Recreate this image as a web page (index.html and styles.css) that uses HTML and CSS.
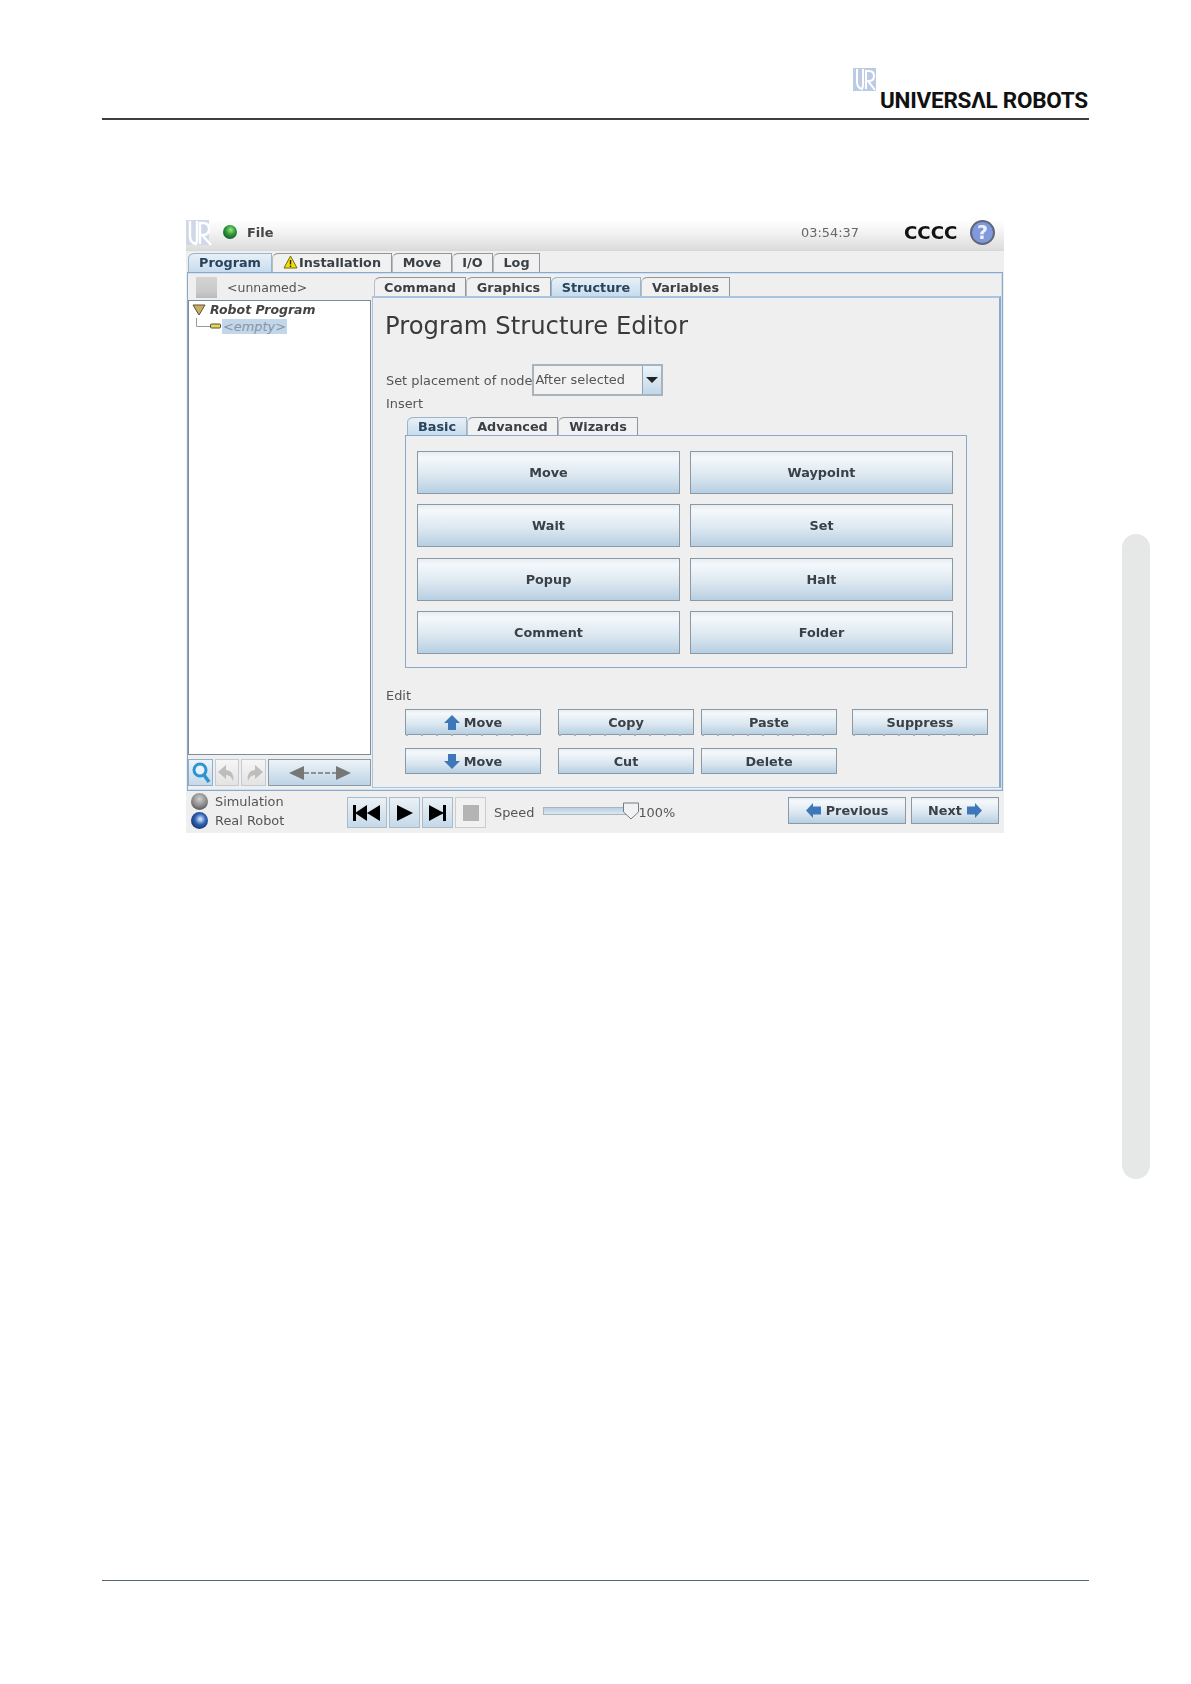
FILE: index.html
```html
<!DOCTYPE html>
<html lang="en">
<head>
<meta charset="utf-8">
<title>Program Structure Editor</title>
<link rel="stylesheet" href="styles.css">
</head>
<body>
<div class="page">
  <header class="doc-header">
    <div class="brand">
      <svg class="brand-mark" width="24" height="24" viewBox="0 0 24 24"><rect width="23" height="23" fill="#bccbe4"/><path d="M4 1v13q0 6 5 7 1-2 1-5V1M13 21V3h3q5 0 5 5t-5 5h-1l7 9" fill="none" stroke="#fff" stroke-width="2"/></svg>
      <span class="brand-name">UNIVERSΛL ROBOTS</span>
    </div>
  </header>

  <main class="app">
    <div class="topbar">
      <svg class="ur-small" width="26" height="27" viewBox="0 0 26 27"><rect y="1" width="23" height="25" fill="#cfd8e6"/><path d="M4 2v15q0 7 6 8 1-2 1-6V2M14 25V4h3q6 0 6 6t-6 6h-1l9 10" fill="none" stroke="#fff" stroke-width="2.400"/></svg>
      <span class="orb orb-green"></span>
      <span class="menu">File</span>
      <span class="clock">03:54:37</span>
      <span class="user">CCCC</span>
      <span class="help">?</span>
    </div>

    <nav class="tabs main-tabs">
      <span class="tab active w-program">Program</span>
      <span class="tab w-install"><svg width="15" height="14" viewBox="0 0 15 14"><path d="M7.500 1 14 13H1z" fill="#f4e000" stroke="#6d6a20"/><path d="M7.500 5v4.500M7.500 10.500v1.500" stroke="#222" stroke-width="1.400"/></svg>Installation</span>
      <span class="tab w-move">Move</span>
      <span class="tab w-io">I/O</span>
      <span class="tab w-log">Log</span>
    </nav>

    <section class="panel">
      <aside class="left">
        <div class="file-row">
          <span class="file-icon"></span>
          <span class="file-name">&lt;unnamed&gt;</span>
        </div>
        <div class="tree">
          <div class="tree-root">
            <svg width="14" height="12" viewBox="0 0 14 12"><path d="M1 1h12L7 11z" fill="#c9ad63" stroke="#5d5235"/></svg>
            <span>Robot Program</span>
          </div>
          <div class="tree-child">
            <svg width="26" height="16" viewBox="0 0 26 16"><path d="M.5 0v8.500H14" fill="none" stroke="#9a9a9a"/><rect x="14.500" y="6" width="10" height="4" rx="1" fill="#e6d75c" stroke="#55502a"/></svg>
            <span class="empty">&lt;empty&gt;</span>
          </div>
        </div>
        <div class="tree-tools">
          <span class="tool tool-on"><svg width="20" height="24" viewBox="0 0 20 24"><circle cx="9" cy="9" r="6" fill="#e6f3fb" stroke="#2f93cf" stroke-width="3"/><path d="m13 14 5 7" stroke="#2f93cf" stroke-width="3.500"/></svg></span>
          <span class="tool tool-off tool-narrow"><svg width="20" height="20" viewBox="0 0 20 20"><path d="M9 2 1 9l8 7v-4q5 0 7 6 2-10-7-11z" fill="#bdbdbd"/></svg></span>
          <span class="tool tool-off"><svg width="20" height="20" viewBox="0 0 20 20"><path d="m11 2 8 7-8 7v-4q-5 0-7 6-2-10 7-11z" fill="#bdbdbd"/></svg></span>
          <span class="tool tool-wide"><svg width="62" height="14" viewBox="0 0 62 14"><path d="M15 0v14L0 7zM47 0v14l15-7z" fill="#777"/><path d="M15 7h32" stroke="#777" stroke-width="1.500" stroke-dasharray="5 2"/></svg></span>
        </div>
      </aside>

      <div class="right">
        <nav class="tabs sub-tabs">
          <span class="tab w-command">Command</span>
          <span class="tab w-graphics">Graphics</span>
          <span class="tab active w-structure">Structure</span>
          <span class="tab w-variables">Variables</span>
        </nav>
        <div class="frame">
          <h1 class="title">Program Structure Editor</h1>
          <div class="placement">
            <span class="label">Set placement of node</span>
            <span class="combo"><span class="combo-text">After selected</span><span class="combo-arrow"><svg width="12" height="6" viewBox="0 0 12 6"><path d="M0 0h12L6 6z" fill="#222"/></svg></span></span>
          </div>
          <div class="label insert-label">Insert</div>
          <nav class="tabs insert-tabs">
            <span class="tab active w-basic">Basic</span>
            <span class="tab w-advanced">Advanced</span>
            <span class="tab w-wizards">Wizards</span>
          </nav>
          <div class="insert-box">
            <button class="btn big">Move</button>
            <button class="btn big">Waypoint</button>
            <button class="btn big">Wait</button>
            <button class="btn big">Set</button>
            <button class="btn big">Popup</button>
            <button class="btn big">Halt</button>
            <button class="btn big">Comment</button>
            <button class="btn big">Folder</button>
          </div>
          <div class="label edit-label">Edit</div>
          <div class="edit-grid">
            <button class="btn small ticked"><svg width="16" height="15" viewBox="0 0 16 15"><path d="M8 0l8 8h-4v7H4V8H0z" fill="#3f78b8"/></svg>Move</button>
            <button class="btn small ticked">Copy</button>
            <button class="btn small ticked">Paste</button>
            <button class="btn small ticked">Suppress</button>
            <button class="btn small"><svg width="16" height="15" viewBox="0 0 16 15"><path d="M8 15l8-8h-4V0H4v7H0z" fill="#3f78b8"/></svg>Move</button>
            <button class="btn small">Cut</button>
            <button class="btn small">Delete</button>
          </div>
        </div>
      </div>
    </section>

    <footer class="controls">
      <div class="modes">
        <div class="mode"><span class="orb orb-grey"></span>Simulation</div>
        <div class="mode"><span class="orb orb-blue"></span>Real Robot</div>
      </div>
      <div class="transport">
        <span class="t-btn t-first"><svg width="28" height="16" viewBox="0 0 28 16"><path d="M0 0h3v16H0zM2 8l12-8v16zM14 8l13-8v16z" fill="#000"/></svg></span>
        <span class="t-btn t-play"><svg width="16" height="16" viewBox="0 0 16 16"><path d="M0 0l16 8-16 8z" fill="#000"/></svg></span>
        <span class="t-btn t-next"><svg width="18" height="16" viewBox="0 0 18 16"><path d="M0 0l15 8-15 8zM14 0h3v16h-3z" fill="#000"/></svg></span>
        <span class="t-btn t-stop"><span class="stop-square"></span></span>
      </div>
      <span class="label speed">Speed</span>
      <span class="slider"><span class="slider-fill"></span><svg class="thumb" width="18" height="18" viewBox="0 0 18 18"><path d="M1.500 1h15v9l-7.500 7-7.500-7z" fill="#f2f2f2" stroke="#6f7d88"/></svg></span>
      <span class="label percent">100%</span>
      <div class="nav-btns">
        <button class="btn nav prev"><svg width="15" height="15" viewBox="0 0 15 15"><path d="M0 7.500 7 0v3.500h8v8H7V15z" fill="#3f78b8"/></svg>Previous</button>
        <button class="btn nav next">Next<svg width="15" height="15" viewBox="0 0 15 15"><path d="M15 7.500 8 0v3.500H0v8h8V15z" fill="#3f78b8"/></svg></button>
      </div>
    </footer>
  </main>

  <footer class="doc-footer"></footer>
  <div class="side-strip"></div>
</div>
</body>
</html>
```

FILE: styles.css
```css
* { box-sizing: border-box; }
html, body { margin: 0; padding: 0; background: #fff; }
body { font-family: "DejaVu Sans", sans-serif; color: #3a3f44; }

.page { position: relative; width: 1191px; height: 1684px; display: flex; flex-direction: column; overflow: hidden; }

/* document chrome */
.doc-header { height: 120px; margin: 0 102px; border-bottom: 2px solid #3e3e3e; display: flex; justify-content: flex-end; }
.brand { width: 235px; height: 118px; padding-top: 68px; }
.brand-mark { display: block; margin-left: -1px; }
.brand-name { display: block; margin: -1px 0 0 26px; font: bold 22.500px/18px Roboto, "Liberation Sans", sans-serif; color: #111; white-space: nowrap; letter-spacing: -.25px; }
.doc-footer { margin: auto 102px 103px; border-top: 1px solid #5a6770; }
.side-strip { position: absolute; left: 1122px; top: 534px; width: 28px; height: 645px; background: #e6e8e8; border-radius: 14px; }

/* app */
.app { width: 818px; margin: 100px 0 0 186px; background: #efefef; filter: blur(.4px); font-size: 12.900px; }

.topbar { height: 31px; padding-bottom: 6px; display: flex; align-items: center; background: linear-gradient(#fff, #f5f5f5 35%, #dcdcdc); border-bottom: 1px solid #d8d8d8; }
.ur-small { display: block; }
.orb { display: inline-block; border-radius: 50%; flex: none; }
.orb-green { width: 14px; height: 14px; margin-left: 11px; background: radial-gradient(circle at 55% 35%, #a5e08a, #2c9a35 40%, #17552a 80%, #1c2a24 100%); }
.menu { margin-left: 10px; font-weight: bold; color: #444; }
.clock { margin-left: auto; color: #666; }
.user { width: 49px; margin-left: 45px; font-weight: bold; font-size: 18.200px; color: #111; }
.help { width: 25px; height: 25px; margin: 0 9px 0 17px; border-radius: 50%; background: #8099dc; border: 2px solid #5f6778; color: #eef1fb; text-align: center; font: bold 19px/21px "DejaVu Sans", sans-serif; }

/* tabs */
.tabs { display: flex; align-items: flex-end; font-weight: bold; font-size: 12.800px; color: #3a4046; }
.tab { height: 100%; display: flex; align-items: center; justify-content: center; gap: 1px; background: #f1f1f1; border: 1px solid #8f979e; border-bottom: 0; border-left-color: #b7bcc1; border-top-left-radius: 7px 5px; white-space: nowrap; }
.tab.active { background: linear-gradient(#e8f0f7, #c7dcee); color: #28435c; border-color: #9db4c9; }
.main-tabs { height: 21px; padding: 2px 0 0 2px; }
.main-tabs .tab { padding-bottom: 2px; }
.sub-tabs { height: 19px; margin-left: 2px; }
.insert-tabs { height: 18px; margin: 5px 0 0 22px; }
.w-program { width: 84px; } .w-install { width: 120px; } .w-move { width: 60px; } .w-io { width: 41px; } .w-log { width: 47px; }
.w-command { width: 92px; } .w-graphics { width: 85px; } .w-structure { width: 90px; } .w-variables { width: 89px; }
.w-basic { width: 60px; } .w-advanced { width: 91px; } .w-wizards { width: 80px; }

/* panel */
.panel { width: 816px; height: 519px; margin-left: 1px; display: flex; border: 1px solid #8aa9c8; box-shadow: inset 0 1px 0 #cfe0f0, inset -1px -1px 0 #cfe0f0; }
.left { width: 184px; flex: none; display: flex; flex-direction: column; }
.file-row { height: 27px; padding-top: 2px; display: flex; align-items: center; }
.file-icon { width: 21px; height: 21px; margin-left: 8px; background: linear-gradient(#d4d4d4, #c9c9c9 70%, #b9b9b9); }
.file-name { margin-left: 10px; color: #555; font-size: 12.500px; }
.tree { height: 455px; width: 183px; background: #fff; border: 1px solid #7f8c99; }
.tree-root { height: 15px; padding: 2px 0 0 3px; display: flex; align-items: center; gap: 4px; font-weight: bold; font-style: italic; font-size: 12.500px; color: #444; white-space: nowrap; }
.tree-child { height: 16px; margin-top: 2px; padding-left: 7px; display: flex; align-items: center; }
.empty { height: 15px; padding: 0 1px; background: #c2d6ec; color: #8b95a0; font-style: italic; line-height: 15px; }
.tree-tools { display: flex; gap: 2px; margin-top: 4px; height: 27px; width: 183px; }
.tool { display: flex; align-items: center; justify-content: center; width: 25px; height: 27px; border: 1px solid #c3ccd4; }
.tool-narrow { width: 24px; }
.tool-on { background: linear-gradient(#eef4f9, #c4d9ea); border-color: #8fb0cb; }
.tool-off { background: linear-gradient(#f6f6f6, #e3e3e3); }
.tool-wide { flex: 1; background: linear-gradient(#edf3f8, #bdd3e5); border-color: #8b9aa6; }

.right { flex: 1; padding-top: 4px; }
.frame { width: 629px; height: 492px; background: #efefef; border: 1px solid #a9c4df; border-top-width: 2px; border-right: 2px solid #8aa9c8; padding: 0 0 0 12px; }
.title { margin: 10px 0 0; font-size: 24.300px; font-weight: normal; line-height: 36px; color: #3a3a3a; }
.label { color: #555; }
.placement { display: flex; align-items: center; margin: 20px 0 0 1px; height: 32px; }
.combo { display: flex; width: 131px; height: 32px; border: 2px solid #a8b4bd; background: #f2f2f2; }
.combo-text { width: 108px; padding-left: 1px; line-height: 28px; color: #555; }
.combo-arrow { flex: 1; display: flex; align-items: center; justify-content: center; background: linear-gradient(#eef4f9, #c2d7e9); border-left: 1px solid #8fa3b3; }
.insert-label { margin: 0 0 0 1px; line-height: 16px; }
.insert-box { width: 562px; height: 233px; margin-left: 20px; padding: 15px 0 0 11px; border: 1px solid #8aa9c8; display: grid; grid-template-columns: 263px 263px; grid-auto-rows: 43px; column-gap: 10px; row-gap: 10.300px; align-content: start; }
.btn { font: bold 12.800px "DejaVu Sans", sans-serif; color: #3a4046; padding: 0; display: flex; align-items: center; justify-content: center; gap: 4px; border: 1px solid #8a99a6; background: linear-gradient(#e6eef4, #f4f8fb 14%, #dbe7f0 58%, #b7cfe2); }
.edit-label { margin: 20px 0 0 1px; line-height: 16px; }
.edit-grid { margin: 5px 0 0 20px; display: grid; grid-template-columns: 153px 143px 151px 136px; grid-auto-rows: 26px; row-gap: 13px; }
.small { width: 136px; height: 26px; position: relative; }
.ticked::after { content: ""; position: absolute; left: 0; right: 0; bottom: -2px; height: 2px; background: repeating-linear-gradient(90deg, #a8b0b8 0 2px, transparent 2px 15px); }

/* bottom controls */
.controls { height: 42px; display: flex; align-items: flex-start; }
.modes { width: 161px; padding: 1px 0 0 5px; }
.mode { height: 19px; display: flex; align-items: center; gap: 7px; color: #555; }
.orb-grey { width: 17px; height: 17px; background: radial-gradient(circle at 50% 35%, #d0d0d0, #858585 55%, #2e2e2e 100%); }
.orb-blue { width: 17px; height: 17px; background: radial-gradient(circle at 55% 42%, #cfdcf5 6%, #2f62b8 40%, #12284d 85%, #0f1a2c 100%); }
.transport { display: flex; gap: 2px; margin-top: 6px; height: 31px; }
.t-btn { height: 31px; display: flex; align-items: center; justify-content: center; background: linear-gradient(#eaf1f6, #c6d9e8); border: 1px solid #a9bac8; }
.t-first { width: 40px; } .t-play { width: 31px; } .t-next { width: 31px; }
.t-stop { width: 31px; background: #f1f1f1; border-color: #ccc; }
.stop-square { width: 16px; height: 16px; background: #b4b4b4; }
.speed { margin: 14px 0 0 8px; }
.slider { position: relative; width: 85px; height: 8px; margin: 16px 0 0 9px; background: #dfe6ec; border: 1px solid #a7b5c1; }
.slider-fill { display: block; height: 100%; background: linear-gradient(#b9cfe1, #dde8f1); }
.thumb { position: absolute; right: -13px; top: -6px; }
.percent { margin: 14px 0 0 10px; }
.nav-btns { margin: 6px 5px 0 auto; display: flex; gap: 5px; }
.nav { height: 27px; gap: 5px; }
.prev { width: 118px; } .next { width: 88px; }
```
